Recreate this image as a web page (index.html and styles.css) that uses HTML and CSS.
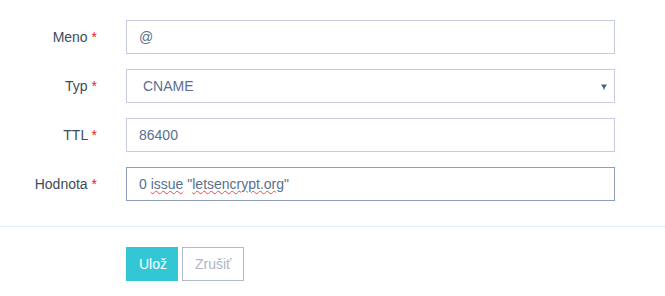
FILE: index.html
```html
<!DOCTYPE html>
<html lang="sk">
<head>
<meta charset="utf-8">
<title>Záznam</title>
<link rel="stylesheet" href="styles.css">
</head>
<body>
<form class="record-form">
  <div class="fields">
    <div class="row">
      <label class="label">Meno <span class="req">*</span></label>
      <div class="control"><div class="field">@</div></div>
    </div>
    <div class="row">
      <label class="label">Typ <span class="req">*</span></label>
      <div class="control"><div class="field select"><span class="select-value">CNAME</span><svg class="caret" width="6" height="6" viewBox="0 0 6 6"><path d="M0 0.5H6L3.6 4.2V5.5H2.4V4.2Z" fill="#4b6385"/></svg></div></div>
    </div>
    <div class="row">
      <label class="label">TTL <span class="req">*</span></label>
      <div class="control"><div class="field">86400</div></div>
    </div>
    <div class="row">
      <label class="label">Hodnota <span class="req">*</span></label>
      <div class="control"><div class="field focused">0 <span class="spell">issue</span> "<span class="spell">letsencrypt.org</span>"</div></div>
    </div>
  </div>
  <hr class="divider">
  <div class="actions">
    <button type="button" class="btn btn-primary">Ulož</button>
    <button type="button" class="btn btn-ghost">Zrušiť</button>
  </div>
</form>
</body>
</html>
```

FILE: styles.css
```css
html, body {
  margin: 0;
  padding: 0;
  background: #ffffff;
}
body {
  font-family: "Liberation Sans", Arial, sans-serif;
  font-size: 14px;
  color: #3e4b5e;
}
.record-form {
  padding-top: 20px;
}
.fields {
  display: flex;
  flex-direction: column;
  gap: 15px;
}
.row {
  display: flex;
  align-items: center;
  gap: 29px;
}
.label {
  width: 97px;
  text-align: right;
  color: #3e4b5e;
  white-space: nowrap;
}
.req {
  color: #e8202a;
}
.control {
  width: 489px;
}
.field {
  box-sizing: border-box;
  height: 34px;
  border: 1px solid #c6cbde;
  padding: 0 12px;
  display: flex;
  align-items: center;
  color: #5a6f8e;
  white-space: pre;
}
.field.focused {
  border-color: #8f9ebd;
}
.select {
  padding-left: 16px;
  padding-right: 7px;
}
.select-value {
  flex: 1;
}
.caret {
  display: block;
  margin-top: 1px;
}
.spell {
  text-decoration: underline wavy #f04a4a;
  text-decoration-thickness: 1px;
  text-underline-offset: 1px;
}
.divider {
  margin: 25px 0 0 0;
  border: 0;
  border-top: 1px solid #e6eef6;
  height: 0;
}
.actions {
  display: flex;
  gap: 4px;
  padding-left: 126px;
  padding-top: 20px;
}
.btn {
  box-sizing: border-box;
  height: 34px;
  font-family: "Liberation Sans", Arial, sans-serif;
  font-size: 14px;
  border: 1px solid transparent;
  border-radius: 0;
  padding: 0 12px;
  cursor: pointer;
}
.btn-primary {
  width: 52px;
  background: #33c7d6;
  border-color: #33c7d6;
  color: #ffffff;
}
.btn-ghost {
  width: 62px;
  background: #ffffff;
  border-color: #b3bacb;
  color: #aeb6c7;
}
```
